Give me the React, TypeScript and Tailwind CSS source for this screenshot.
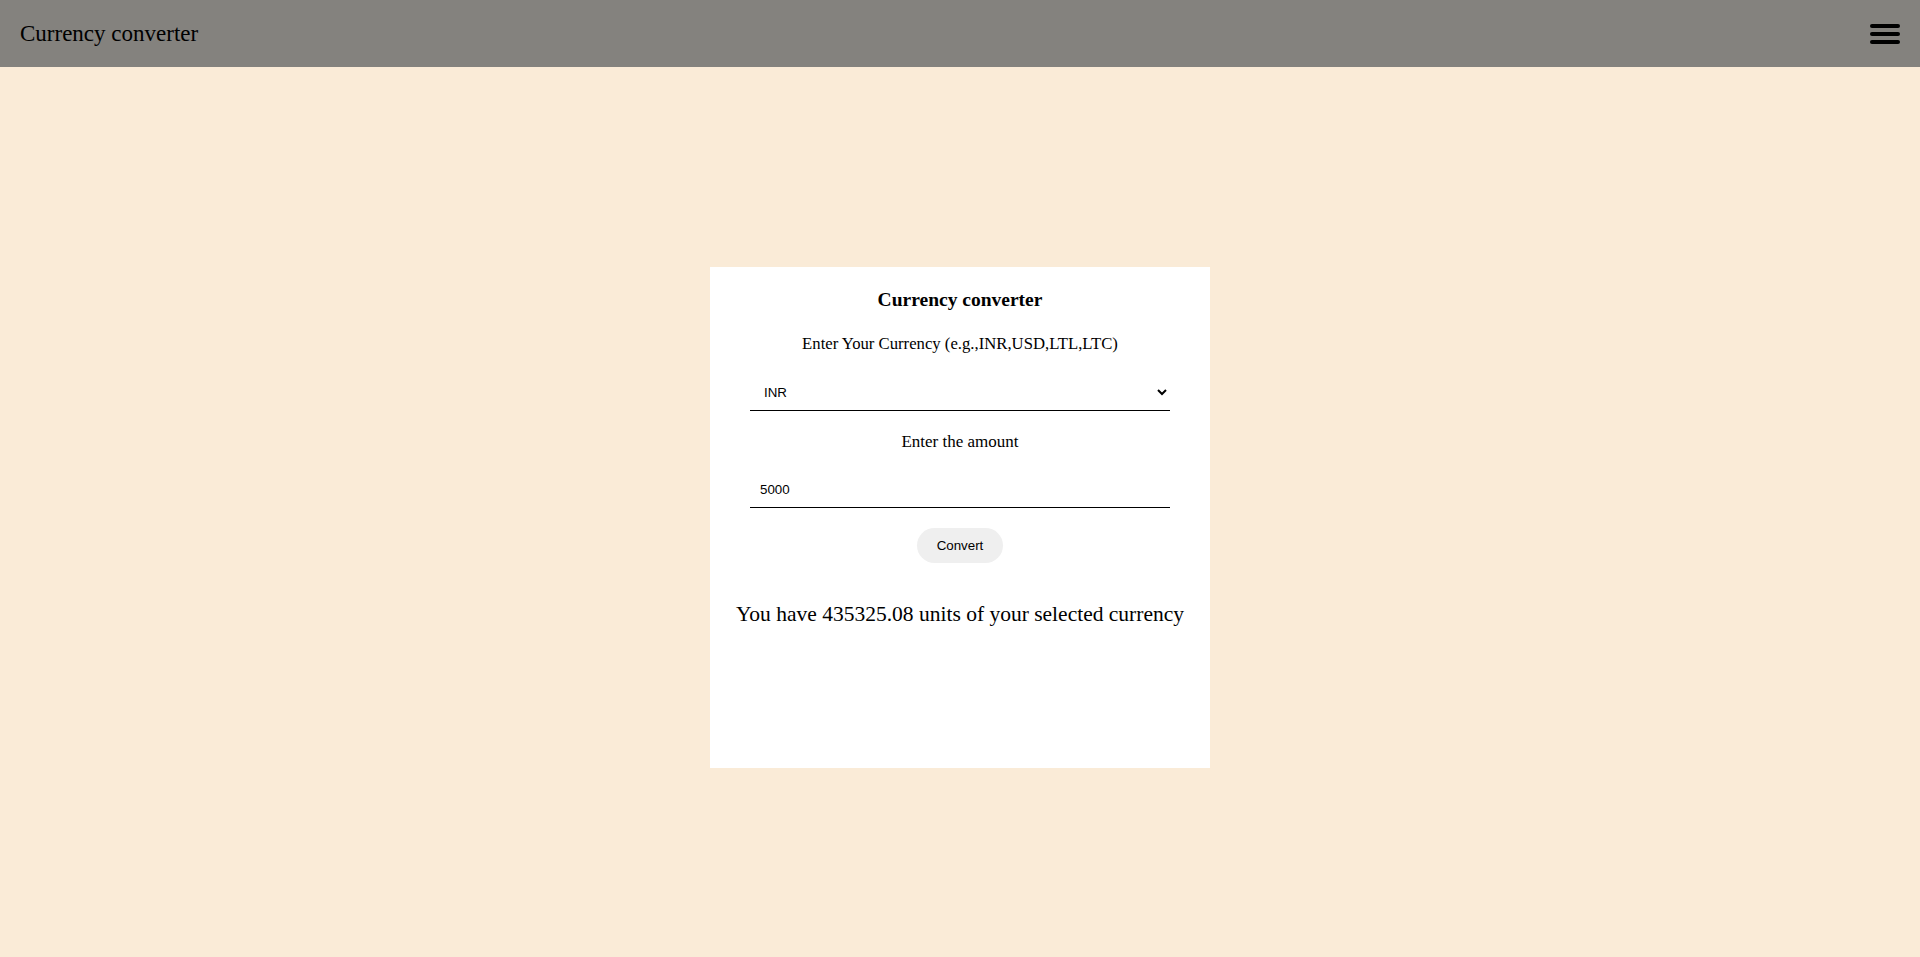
import React, { useState } from 'react';

const serif = { fontFamily: '"Liberation Serif", "DejaVu Serif", serif' };
const sans = { fontFamily: '"Liberation Sans", Arial, sans-serif' };

const Header: React.FC = () => {
  return (
    <header className="h-[67px] bg-[#84827e] flex items-center justify-between pl-[20px] pr-[20px]">
      <h1 className="text-[23px] leading-none text-black" style={serif}>
        Currency converter
      </h1>
      <button className="flex flex-col gap-[4px] w-[30px] mt-[1px]" aria-label="menu">
        <span className="block h-[4px] w-[30px] rounded-full bg-black" />
        <span className="block h-[4px] w-[30px] rounded-full bg-black" />
        <span className="block h-[4px] w-[30px] rounded-full bg-black" />
      </button>
    </header>
  );
};

export default function App() {
  const [currency, setCurrency] = useState('INR');
  const [amount, setAmount] = useState('5000');

  return (
    <div className="min-h-[988px] bg-[#faebd7]" style={serif}>
      <Header />
      <main className="flex justify-center pt-[200px] pb-[220px]">
        <div className="w-[500px] h-[501px] bg-white flex flex-col items-center text-center">
          <h2 className="mt-[21px] text-[19.5px] leading-[24px] font-bold text-black">
            Currency converter
          </h2>
          <p className="mt-[20px] text-[16.7px] leading-[24px] text-black whitespace-nowrap">
            Enter Your Currency (e.g.,INR,USD,LTL,LTC)
          </p>
          <select
            value={currency}
            onChange={(e) => setCurrency(e.target.value)}
            className="mt-[18px] w-[420px] h-[37px] pl-[10px] pr-[6px] border-b border-black text-[13.33px] text-black outline-none"
            style={sans}
          >
            <option>INR</option>
            <option>USD</option>
            <option>LTL</option>
            <option>LTC</option>
          </select>
          <p className="mt-[19px] text-[17px] leading-[24px] text-black">Enter the amount</p>
          <input
            type="text"
            value={amount}
            onChange={(e) => setAmount(e.target.value)}
            className="mt-[17px] w-[420px] h-[37px] px-[10px] border-b border-black text-[13.33px] text-black outline-none"
            style={sans}
          />
          <button
            className="mt-[20px] w-[86px] h-[35px] rounded-full bg-[#efefef] text-[13.33px] text-black"
            style={sans}
          >
            Convert
          </button>
          <p className="mt-[36px] text-[21.5px] leading-[30px] text-black whitespace-nowrap">
            You have 435325.08 units of your selected currency
          </p>
        </div>
      </main>
    </div>
  );
}
